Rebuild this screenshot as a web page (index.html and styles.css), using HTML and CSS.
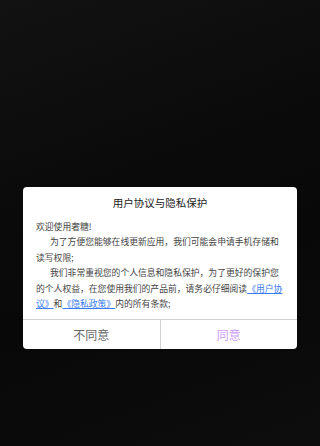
FILE: index.html
```html
<!DOCTYPE html>
<html lang="zh-CN">
<head>
<meta charset="utf-8">
<link rel="stylesheet" href="styles.css">
</head>
<body>
<div class="screen">
  <div class="dialog">
    <div class="title">用户协议与隐私保护</div>
    <div class="content">
      <p class="line">欢迎使用奢糖!</p>
      <p class="para">为了方便您能够在线更新应用，我们可能会申请手机存储和读写权限;</p>
      <p class="para">我们非常重视您的个人信息和隐私保护，为了更好的保护您的个人权益，在您使用我们的产品前，请务必仔细阅读<a class="link">《用户协议》</a>和<a class="link">《隐私政策》</a>内的所有条款;</p>
    </div>
    <div class="actions">
      <div class="btn btn-no">不同意</div>
      <div class="btn btn-yes">同意</div>
    </div>
  </div>
</div>
</body>
</html>
```
FILE: styles.css
```css
html, body {
  margin: 0;
  padding: 0;
  width: 320px;
  height: 446px;
  overflow: hidden;
}
.screen {
  width: 320px;
  height: 446px;
  background: linear-gradient(160deg, #121212 0%, #0b0b0b 35%, #080808 60%, #0d0d0d 100%);
  display: flex;
  flex-direction: column;
  align-items: center;
  padding-top: 187px;
  box-sizing: border-box;
  font-family: "Noto Sans CJK SC", "Noto Sans", sans-serif;
}
.dialog {
  width: 274px;
  background: #fff;
  border-radius: 4px;
  overflow: hidden;
}
.title {
  height: 32px;
  line-height: 32px;
  text-align: center;
  font-size: 10.5px;
  color: #222;
}
.content {
  padding: 0 12px 8px 13px;
  font-size: 8.8px;
  line-height: 15.4px;
  color: #444;
}
.content p {
  margin: 0;
}
.para {
  text-indent: 14px;
}
.link {
  color: #3a7cf2;
  text-decoration: underline;
}
.actions {
  display: flex;
  border-top: 1px solid #d0d0d0;
  height: 29px;
}
.btn {
  flex: 1;
  display: flex;
  align-items: center;
  justify-content: center;
  font-size: 12px;
}
.btn-no {
  color: #666;
  border-right: 1px solid #d0d0d0;
}
.btn-yes {
  color: #cc9cf6;
}
```
